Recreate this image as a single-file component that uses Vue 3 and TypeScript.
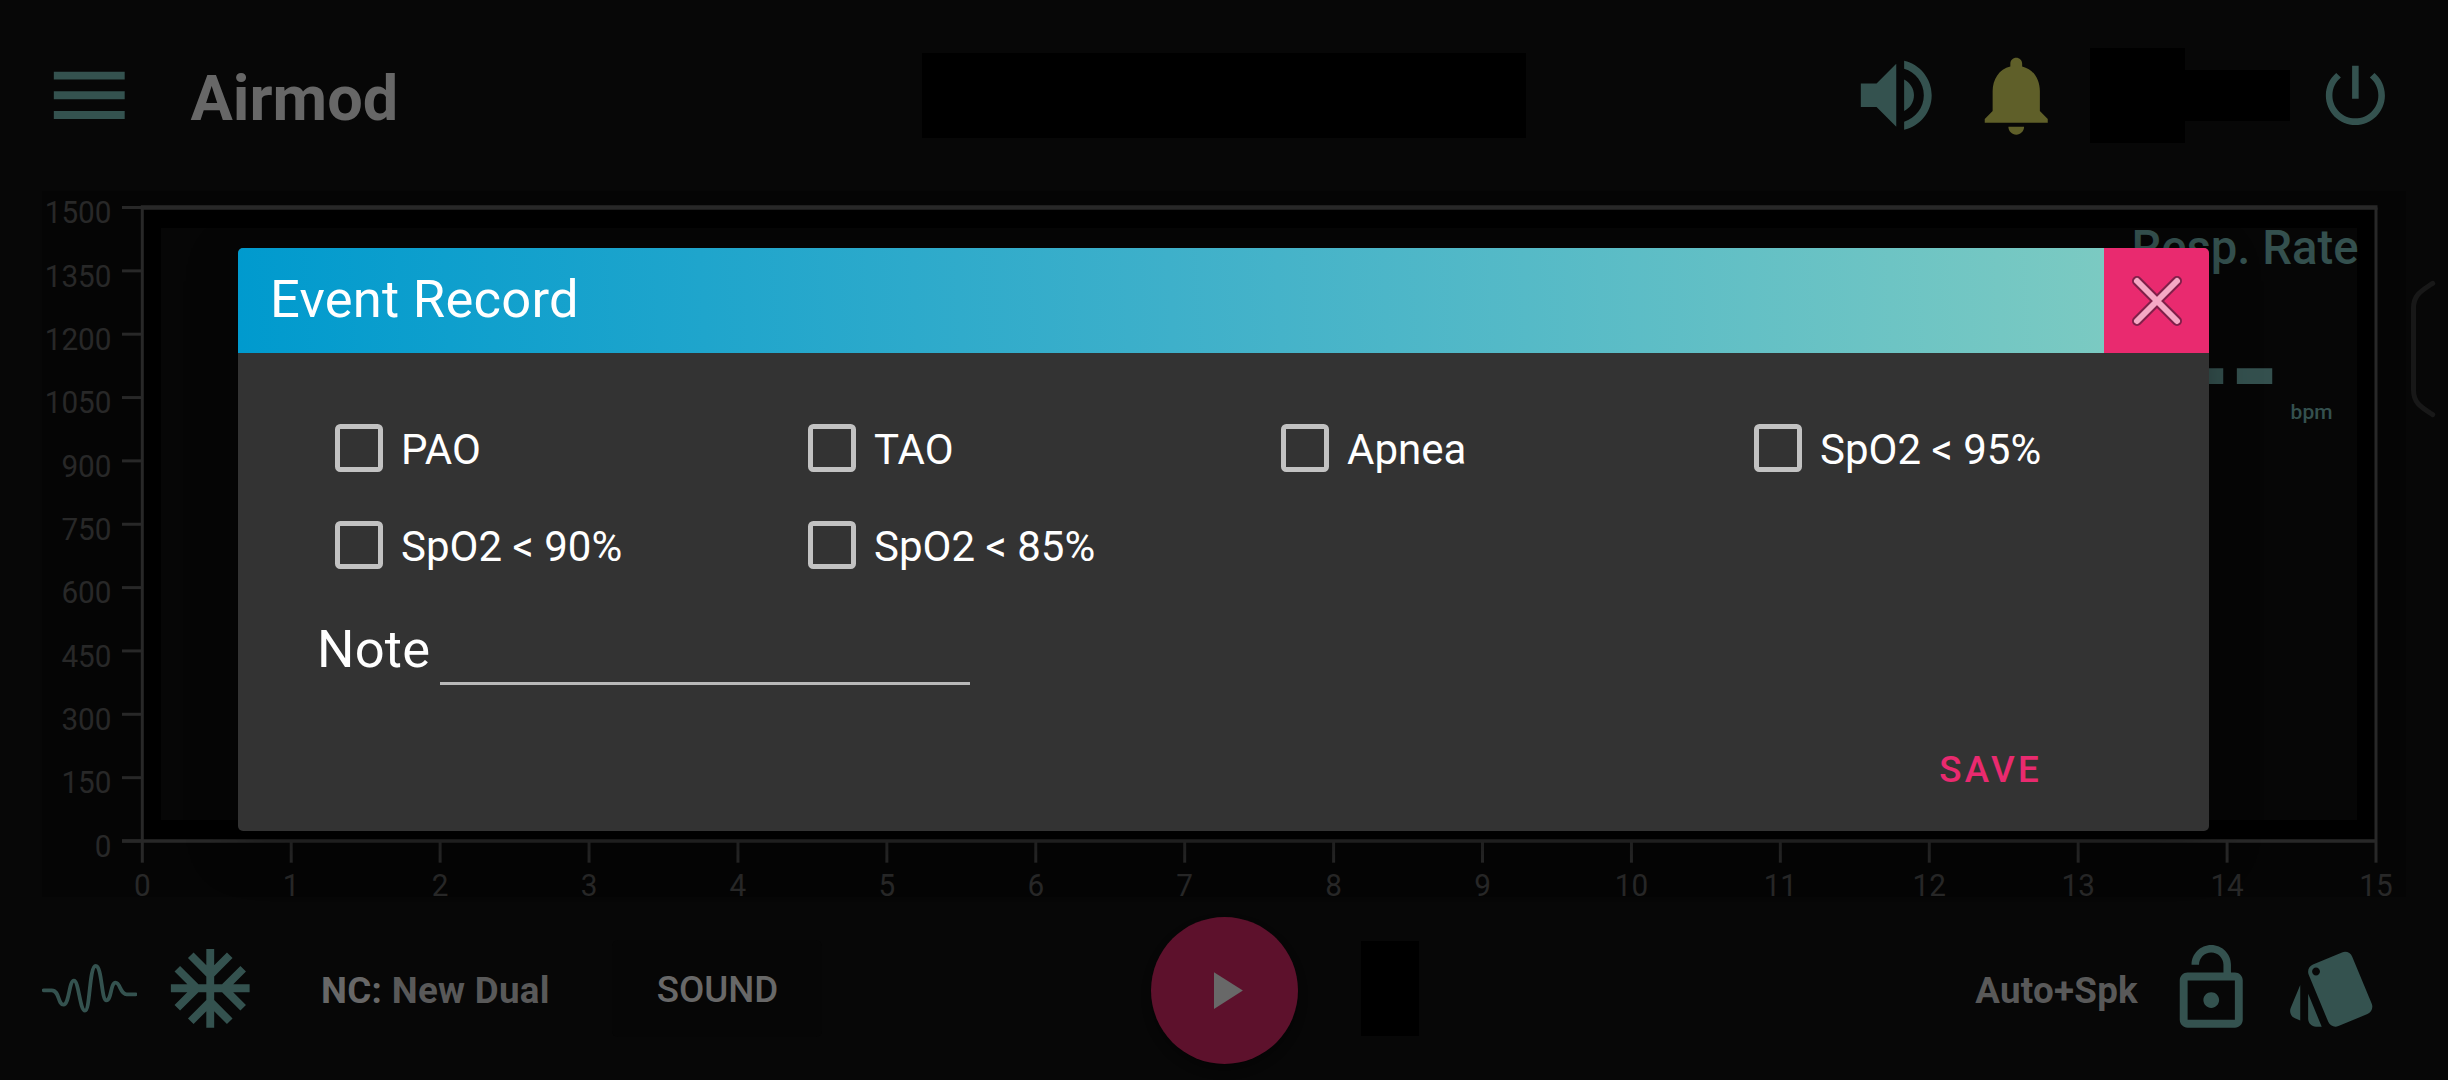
<script setup lang="ts">
import { ref } from 'vue'

interface EventOption {
  id: string
  label: string
}

const options: EventOption[] = [
  { id: 'pao', label: 'PAO' },
  { id: 'tao', label: 'TAO' },
  { id: 'apnea', label: 'Apnea' },
  { id: 'spo95', label: 'SpO2 < 95%' },
  { id: 'spo90', label: 'SpO2 < 90%' },
  { id: 'spo85', label: 'SpO2 < 85%' },
]

const checked = ref<string[]>([])
const note = ref('')

// Chart geometry, in pixels of the chart area
const plot = { left: 142.3, right: 2376, top: 16.5, bottom: 650 }
const digitWidth = 16.7
const xTicks = Array.from({ length: 16 }, (_, i) => ({
  label: String(i),
  x: plot.left + ((plot.right - plot.left) * i) / 15,
}))
const yTicks = Array.from({ length: 11 }, (_, i) => ({
  label: String(1500 - i * 150),
  y: plot.top + ((plot.bottom - plot.top) * i) / 10,
}))
</script>

<template>
  <div class="screen">
    <header class="topbar">
      <svg class="icon" viewBox="0 0 24 24"><path d="M3 18h18v-2H3v2zm0-5h18v-2H3v2zm0-7v2h18V6H3z" /></svg>
      <h1 class="brand">Airmod</h1>
      <div class="mask mask-title"></div>
      <div class="actions">
        <svg class="icon" viewBox="0 0 24 24">
          <path d="M3 9v6h4l5 5V4L7 9H3zm13.5 3c0-1.77-1.02-3.29-2.5-4.03v8.05c1.48-.73 2.5-2.25 2.5-4.02zM14 3.23v2.06c2.89.86 5 3.54 5 6.71s-2.11 5.85-5 6.71v2.06c4.01-.91 7-4.49 7-8.77s-2.99-7.86-7-8.77z" />
        </svg>
        <svg class="icon bell" viewBox="0 0 24 24">
          <path d="M12 22c1.1 0 2-.9 2-2h-4c0 1.1.89 2 2 2zm6-6v-5c0-3.07-1.64-5.64-4.5-6.32V4c0-.83-.67-1.5-1.5-1.5s-1.5.67-1.5 1.5v.68C7.63 5.36 6 7.92 6 11v5l-2 2v1h16v-1l-2-2z" />
        </svg>
        <div class="status">
          <div class="mask mask-tall"></div>
          <div class="mask mask-short"></div>
        </div>
        <svg class="icon power" viewBox="0 0 24 24">
          <path d="M13 3h-2v10h2V3zm4.83 2.17l-1.42 1.42C17.99 7.86 19 9.81 19 12c0 3.87-3.13 7-7 7s-7-3.13-7-7c0-2.19 1.01-4.14 2.58-5.42L6.17 5.17C4.23 6.82 3 9.26 3 12c0 4.97 4.03 9 9 9s9-4.03 9-9c0-2.74-1.23-5.18-3.17-6.83z" />
        </svg>
      </div>
    </header>

    <main class="chart">
      <svg class="axes" width="2448" height="706" viewBox="0 0 2448 706">
        <rect x="42" y="0" width="2364" height="706" fill="#050505" />
        <rect :x="plot.left" :y="plot.top" :width="plot.right - plot.left" :height="plot.bottom - plot.top" fill="#000" />
        <rect x="161" y="37" width="2196" height="592" fill="#060606" />
        <g class="lines">
          <line :x1="plot.left - 1.5" :x2="plot.right + 1.5" :y1="plot.top" :y2="plot.top" stroke-width="4.6" />
          <line x1="122" :x2="plot.right" :y1="plot.bottom" :y2="plot.bottom" stroke-width="3.4" />
          <line :x1="plot.left" :x2="plot.left" :y1="plot.top" :y2="plot.bottom" stroke-width="3" />
          <line :x1="plot.right" :x2="plot.right" :y1="plot.top" :y2="plot.bottom" stroke-width="3" />
          <line v-for="t in yTicks" :key="t.label" x1="122" :x2="plot.left" :y1="t.y" :y2="t.y" stroke-width="3" />
          <line v-for="t in xTicks" :key="t.label" :x1="t.x" :x2="t.x" :y1="plot.bottom" y2="671.7" stroke-width="3" />
        </g>
        <g class="labels">
          <text
            v-for="t in yTicks"
            :key="t.label"
            x="111.5"
            :y="t.y + 15.8"
            :textLength="t.label.length * digitWidth"
            lengthAdjust="spacingAndGlyphs"
            text-anchor="end"
          >{{ t.label }}</text>
          <text
            v-for="t in xTicks"
            :key="t.label"
            :x="t.x"
            y="704.5"
            :textLength="t.label.length * digitWidth"
            lengthAdjust="spacingAndGlyphs"
            text-anchor="middle"
          >{{ t.label }}</text>
        </g>
      </svg>
      <section class="rate">
        <div class="rate-title">Resp. Rate</div>
        <div class="rate-value">---</div>
        <div class="rate-unit">bpm</div>
      </section>
    </main>

    <footer class="bottombar">
      <svg class="wave" viewBox="0 0 95 52">
        <path d="M1.7 27.300h8c8 0 6 14.400 11.800 14.400S27 17.700 31.900 17.700 37.800 47.700 43 47.700 47.200 3 53.700 3s5.500 34.300 10.700 34.300 4-17.600 9.200-17.600c4.700 0 4.600 11.600 11 11.600h9" />
      </svg>
      <svg class="icon snow" viewBox="0 0 24 24">
        <path d="M22 11h-4.170l3.240-3.240-1.410-1.420L15 11h-2V9l4.660-4.660-1.420-1.410L13 6.170V2h-2v4.170L7.760 2.930 6.340 4.340 11 9v2H9L4.340 6.340 2.930 7.760 6.170 11H2v2h4.170l-3.240 3.240 1.410 1.420L9 13h2v2l-4.660 4.660 1.420 1.410L11 17.830V22h2v-4.170l3.240 3.240 1.420-1.410L13 15v-2h2l4.660 4.660 1.410-1.420L17.830 13H22z" />
      </svg>
      <div class="mode"><span class="mode-key">NC:</span> New Dual</div>
      <button class="sound">SOUND</button>
      <button class="play">
        <svg viewBox="0 0 24 24"><path d="M8 5v14l11-7z" /></svg>
      </button>
      <div class="mask mask-slot"></div>
      <div class="trigger">Auto+Spk</div>
      <svg class="icon" viewBox="0 0 24 24">
        <path d="M12 17c1.100 0 2-.9 2-2s-.9-2-2-2-2 .9-2 2 .9 2 2 2zm6-9h-1V6c0-2.760-2.240-5-5-5S7 3.240 7 6h1.900c0-1.710 1.390-3.100 3.100-3.100 1.710 0 3.100 1.390 3.100 3.100v2H6c-1.100 0-2 .9-2 2v10c0 1.100.9 2 2 2h12c1.100 0 2-.9 2-2V10c0-1.100-.9-2-2-2zm0 12H6V10h12v10z" />
      </svg>
      <svg class="icon cards" viewBox="0 0 24 24">
        <path d="M2.530 19.650l1.340.56v-9.030l-2.430 5.860c-.41 1.020.08 2.190 1.090 2.610zm19.500-3.700L17.070 3.980c-.31-.75-1.040-1.210-1.810-1.230-.26 0-.53.04-.79.15L7.100 5.950c-.75.31-1.210 1.030-1.230 1.800-.01.27.04.54.15.8l4.960 11.970c.31.76 1.050 1.220 1.830 1.230.26 0 .52-.05.77-.15l7.360-3.050c1.020-.42 1.510-1.590 1.090-2.600zM7.880 8.750c-.55 0-1-.45-1-1s.45-1 1-1 1 .45 1 1-.45 1-1 1zm-2 11c0 1.100.9 2 2 2h1.450l-3.450-8.340v6.340z" />
      </svg>
    </footer>

    <svg class="handle" viewBox="0 0 28 140">
      <path d="M23.700 4.300C12 12 4.500 16 4.500 29v82c0 13 7.500 17 19.200 24.700" />
    </svg>

    <div class="dialog" role="dialog">
      <div class="dialog-head">
        <h2 class="dialog-title">Event Record</h2>
        <button class="close" aria-label="Close">
          <svg viewBox="0 0 54 54">
            <path class="edge" d="M7 7l40 40M47 7L7 47" />
            <path class="core" d="M7 7l40 40M47 7L7 47" />
          </svg>
        </button>
      </div>
      <div class="dialog-body">
        <div class="options">
          <label v-for="o in options" :key="o.id" class="option">
            <input v-model="checked" type="checkbox" class="box" :value="o.id" />
            <span class="option-label">{{ o.label }}</span>
          </label>
        </div>
        <label class="note">
          <span class="note-label">Note</span>
          <input v-model="note" class="note-field" type="text" />
        </label>
        <div class="dialog-actions"><button class="save">SAVE</button></div>
      </div>
    </div>
  </div>
</template>

<style>
body {
  margin: 0;
  background: #070707;
}
</style>

<style scoped>
.screen {
  position: relative;
  width: 2448px;
  height: 1080px;
  display: flex;
  flex-direction: column;
  overflow: hidden;
  background: #070707;
  font-family: Roboto, 'Liberation Sans', sans-serif;
}
button {
  border: 0;
  padding: 0;
  background: none;
  font-family: inherit;
}
.icon {
  flex: none;
  display: block;
  width: 94.5px;
  height: 94.5px;
  fill: #34524f;
}
.mask {
  flex: none;
  background: #000;
}

.topbar {
  flex: none;
  height: 191px;
  box-sizing: border-box;
  padding-left: 42px;
  display: flex;
  align-items: center;
}
.brand {
  width: 731.5px;
  margin: 6px 0 0 54px;
  font-size: 63px;
  line-height: 74px;
  font-weight: 700;
  color: #676767;
}
.mask-title {
  width: 604px;
  height: 85px;
}
.actions {
  display: flex;
  align-items: center;
  gap: 26.25px;
  margin-left: 322.5px;
}
.bell {
  fill: #5f5f29;
}
.status {
  display: flex;
  align-items: center;
}
.mask-tall {
  width: 95px;
  height: 95px;
}
.mask-short {
  width: 105px;
  height: 51px;
}
.power {
  width: 78.75px;
  height: 78.75px;
}

.chart {
  flex: none;
  position: relative;
  height: 706px;
}
.axes {
  display: block;
  overflow: visible;
}
.lines {
  stroke: #282828;
}
.labels {
  font-size: 32px;
  fill: #282828;
}
.rate {
  position: absolute;
  top: 38.5px;
  right: 89.5px;
  display: flex;
  flex-direction: column;
  align-items: flex-end;
  color: #34504e;
  font-weight: 500;
}
.rate-title {
  font-size: 47.25px;
  line-height: 36px;
}
.rate-value {
  margin: 54px 78px 0 0;
  font-size: 137px;
  line-height: 100px;
  letter-spacing: 2.4px;
  transform: scaleY(1.22);
}
.rate-unit {
  margin: -20px 26px 0 0;
  font-size: 21px;
  line-height: 24px;
}

.bottombar {
  flex: none;
  height: 183px;
  box-sizing: border-box;
  padding-left: 42px;
  display: flex;
  align-items: center;
}
.wave {
  flex: none;
  width: 95px;
  height: 52px;
  fill: none;
  stroke: #34524f;
  stroke-width: 3.8;
  stroke-linecap: round;
}
.snow {
  margin-left: 26.25px;
}
.mode,
.sound,
.trigger {
  flex: none;
  font-size: 36.75px;
  line-height: 44px;
  white-space: nowrap;
}
.mode {
  width: 291px;
  margin: 4px 0 0 63.25px;
  font-weight: 700;
  letter-spacing: 0.3px;
  color: #595959;
}
.mode-key {
  color: #676767;
}
.sound {
  width: 210px;
  height: 97px;
  padding: 2px 0 0 1px;
  border-radius: 6px;
  background: #060606;
  font-weight: 500;
  color: #686868;
}
.play {
  flex: none;
  width: 147px;
  height: 147px;
  margin: 4px 0 0 329px;
  border-radius: 50%;
  background: #5d112c;
  box-shadow: 0 6px 10px rgba(0, 0, 0, 0.35);
  display: flex;
  align-items: center;
  justify-content: center;
}
.play svg {
  width: 63px;
  height: 63px;
  fill: #686868;
}
.mask-slot {
  width: 58px;
  height: 95px;
  margin-left: 63px;
}
.trigger {
  width: 719px;
  margin: 4px 26.25px 0 0;
  text-align: right;
  font-weight: 700;
  letter-spacing: 0.25px;
  color: #595959;
}
.cards {
  margin-left: 26.25px;
}

.handle {
  position: absolute;
  left: 2409px;
  top: 279px;
  width: 28px;
  height: 140px;
  fill: none;
  stroke: #181818;
  stroke-width: 5;
  stroke-linecap: round;
}

.dialog {
  position: absolute;
  left: 238px;
  top: 248px;
  width: 1971px;
  height: 583px;
  border-radius: 5px;
  overflow: hidden;
  background: #333;
  box-shadow: 0 16px 50px rgba(0, 0, 0, 0.35);
}
.dialog-head {
  height: 105px;
  display: flex;
}
.dialog-title {
  flex: 1;
  margin: 0;
  padding-left: 32px;
  font-size: 52.5px;
  line-height: 102px;
  font-weight: 400;
  letter-spacing: 0.25px;
  color: #fff;
  background: linear-gradient(86.8deg, #009ace, #3eb0ca 50%, #7bcac2);
}
.close {
  flex: none;
  width: 105px;
  height: 105px;
  background: #e92a6f;
  display: flex;
  align-items: center;
  justify-content: center;
}
.close svg {
  width: 54px;
  height: 54px;
  margin-top: 1px;
  margin-left: 1px;
  fill: none;
  stroke-linecap: round;
}
.edge {
  stroke: #80204a;
  stroke-width: 10;
}
.core {
  stroke: #f5a9c5;
  stroke-width: 6;
}
.dialog-body {
  padding: 46.500px 0 0;
}
.options {
  display: grid;
  grid-template-columns: repeat(4, 473px);
  grid-auto-rows: 97px;
  margin-left: 97.3px;
  width: 1873px;
}
.option {
  display: flex;
  align-items: center;
  gap: 18.5px;
}
.box {
  appearance: none;
  box-sizing: border-box;
  width: 47.25px;
  height: 47.25px;
  margin: 0;
  border: 5px solid #c2c2c2;
  border-radius: 5.25px;
}
.option-label {
  padding-top: 4px;
  font-size: 42px;
  line-height: 50px;
  color: #fff;
}
.note {
  display: flex;
  align-items: flex-end;
  height: 91.500px;
  padding-left: 79px;
}
.note-label {
  width: 123px;
  font-size: 52.5px;
  line-height: 72px;
  letter-spacing: 0.2px;
  color: #fff;
}
.note-field {
  box-sizing: border-box;
  width: 530px;
  height: 72px;
  padding: 0;
  border: 0;
  border-bottom: 3px solid #b9b9b9;
  background: none;
  color: #fff;
  font: 42px Roboto, sans-serif;
  outline: none;
}
.dialog-actions {
  display: flex;
  justify-content: flex-end;
  padding: 60.500px 167px 0 0;
}
.save {
  font-size: 36.75px;
  line-height: 48px;
  font-weight: 500;
  letter-spacing: 3.3px;
  color: #e92a6f;
}
</style>
